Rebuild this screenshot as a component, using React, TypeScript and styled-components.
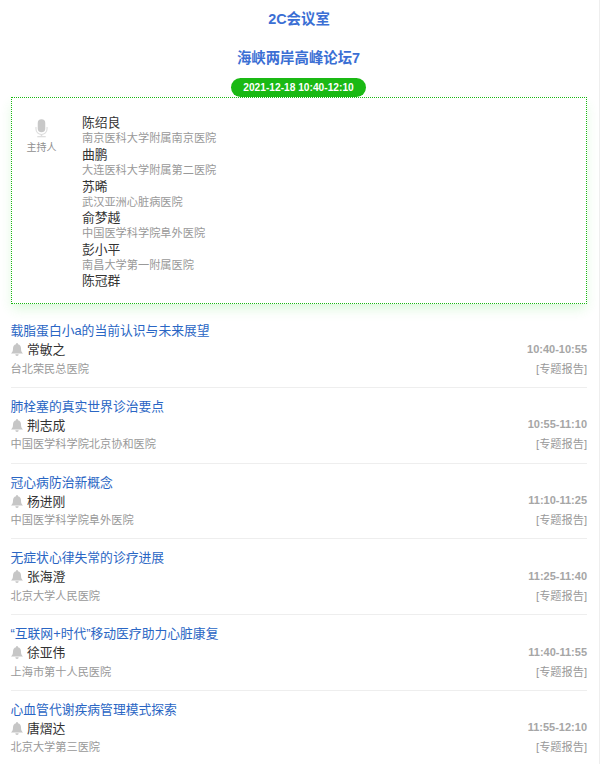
import React from "react";
import styled, { createGlobalStyle } from "styled-components";

const Global = createGlobalStyle`
  html, body { margin: 0; padding: 0; background: #fff; }
  body { font-family: "Liberation Sans", "Noto Sans CJK SC", sans-serif; height: 764px; overflow: hidden; }
`;

const Page = styled.div`
  width: 599px;
  height: 764px;
  border-right: 1px solid #eeeeee;
  box-sizing: content-box;
  overflow: hidden;
`;
const Content = styled.div`
  padding: 0 12px 0 11px;
  display: flex;
  flex-direction: column;
`;
const Heading = styled.h1<{ $mt: number; $nudge?: number }>`
  margin: ${(p) => p.$mt}px 0 0;
  padding-right: ${(p) => p.$nudge ?? 0}px;
  font-size: 14.4px;
  line-height: 20px;
  font-weight: 700;
  color: #3b6fd4;
  text-align: center;
`;
const PillRow = styled.div`
  display: flex;
  justify-content: center;
  margin-top: 10px;
  padding-right: 1px;
`;
const Pill = styled.div`
  height: 19px;
  width: 135px;
  border-radius: 10px;
  background: #1ab914;
  color: #fff;
  font-size: 10.2px;
  font-weight: 700;
  line-height: 19px;
  text-align: center;
`;
const HostBox = styled.section`
  height: 207px;
  box-sizing: border-box;
  border: 1px dotted #1ab914;
  box-shadow: 0 6px 12px -2px rgba(60, 220, 60, 0.2);
  display: flex;
  padding-top: 16.4px;
`;
const HostLabel = styled.div`
  width: 59px;
  margin-right: 11px;
  display: flex;
  flex-direction: column;
  align-items: center;
  color: #8f8f8f;
  font-size: 10px;
  line-height: 14px;
  gap: 3px;
  padding-top: 4.6px;
`;
const HostList = styled.div`
  display: flex;
  flex-direction: column;
`;
const HostEntry = styled.div`
  height: 31.6px;
`;
const HostName = styled.div`
  font-size: 12.8px;
  line-height: 17px;
  color: #333;
`;
const HostOrg = styled.div`
  font-size: 11.2px;
  line-height: 14.6px;
  color: #999;
`;
const Talks = styled.div`
  margin-top: 8px;
  display: flex;
  flex-direction: column;
`;
const Talk = styled.article<{ $last?: boolean }>`
  height: 75.8px;
  box-sizing: border-box;
  border-bottom: ${(p) => (p.$last ? "none" : "1px solid #eeeeee")};
  padding-top: 11px;
  display: flex;
  flex-direction: column;
`;
const TalkTitle = styled.div`
  font-size: 12.8px;
  line-height: 16px;
  color: #2a66c4;
  margin-left: -0.5px;
`;
const Row = styled.div`
  display: flex;
  justify-content: space-between;
  align-items: center;
  height: 19px;
`;
const Speaker = styled.div`
  display: flex;
  align-items: center;
  gap: 4px;
  font-size: 12.8px;
  color: #333;
`;
const BellSlot = styled.span`
  display: flex;
  margin-top: 2px;
`;
const Time = styled.span`
  font-size: 11px;
  font-weight: 700;
  color: #a6a6a6;
`;
const Org = styled.span`
  font-size: 11.2px;
  color: #999;
  margin-left: -0.5px;
`;
const Kind = styled.span`
  font-size: 11.2px;
  color: #999;
`;

const Mic = () => (
  <svg width="15" height="19" viewBox="0 0 16 20" fill="#c8c8c8">
    <rect x="4" y="0" width="8" height="14" rx="4" />
    <path d="M1.5 8.5v2a6.5 6.5 0 0 0 13 0v-2h-1.2v2a5.3 5.3 0 0 1-10.6 0v-2z" fill="#dedede" />
    <rect x="7.2" y="16" width="1.6" height="2.4" fill="#dedede" />
    <rect x="3.5" y="18" width="9" height="1.4" fill="#dedede" />
  </svg>
);
const Bell = () => (
  <svg width="12" height="13" viewBox="0 0 12 13" fill="#c6c6c6">
    <path d="M6 0a1 1 0 0 1 1 1v.3C9 1.8 10 3.4 10 5.5c0 2.8.6 3.8 2 5H0c1.4-1.2 2-2.2 2-5C2 3.400 3 1.800 5 1.300V1a1 1 0 0 1 1-1z" />
    <path d="M4.300 11.300h3.400a1.700 1.700 0 0 1-3.400 0z" />
  </svg>
);

const hosts = [
  ["陈绍良", "南京医科大学附属南京医院"],
  ["曲鹏", "大连医科大学附属第二医院"],
  ["苏晞", "武汉亚洲心脏病医院"],
  ["俞梦越", "中国医学科学院阜外医院"],
  ["彭小平", "南昌大学第一附属医院"],
  ["陈冠群", ""],
];
const talks = [
  ["载脂蛋白小a的当前认识与未来展望", "常敏之", "10:40-10:55", "台北荣民总医院"],
  ["肺栓塞的真实世界诊治要点", "荆志成", "10:55-11:10", "中国医学科学院北京协和医院"],
  ["冠心病防治新概念", "杨进刚", "11:10-11:25", "中国医学科学院阜外医院"],
  ["无症状心律失常的诊疗进展", "张海澄", "11:25-11:40", "北京大学人民医院"],
  ["“互联网+时代”移动医疗助力心脏康复", "徐亚伟", "11:40-11:55", "上海市第十人民医院"],
  ["心血管代谢疾病管理模式探索", "唐熠达", "11:55-12:10", "北京大学第三医院"],
];

export default function App() {
  return (
    <Page>
      <Global />
      <Content>
        <Heading $mt={9}>2C会议室</Heading>
        <Heading $mt={19} $nudge={1}>海峡两岸高峰论坛7</Heading>
        <PillRow>
          <Pill>2021-12-18 10:40-12:10</Pill>
        </PillRow>
        <HostBox>
          <HostLabel>
            <Mic />
            主持人
          </HostLabel>
          <HostList>
            {hosts.map(([n, o]) => (
              <HostEntry key={n}>
                <HostName>{n}</HostName>
                {o && <HostOrg>{o}</HostOrg>}
              </HostEntry>
            ))}
          </HostList>
        </HostBox>
        <Talks>
          {talks.map(([t, s, tm, o], i) => (
            <Talk key={t} $last={i === talks.length - 1}>
              <TalkTitle>{t}</TalkTitle>
              <Row>
                <Speaker>
                  <BellSlot>
                    <Bell />
                  </BellSlot>
                  {s}
                </Speaker>
                <Time>{tm}</Time>
              </Row>
              <Row>
                <Org>{o}</Org>
                <Kind>[专题报告]</Kind>
              </Row>
            </Talk>
          ))}
        </Talks>
      </Content>
    </Page>
  );
}
